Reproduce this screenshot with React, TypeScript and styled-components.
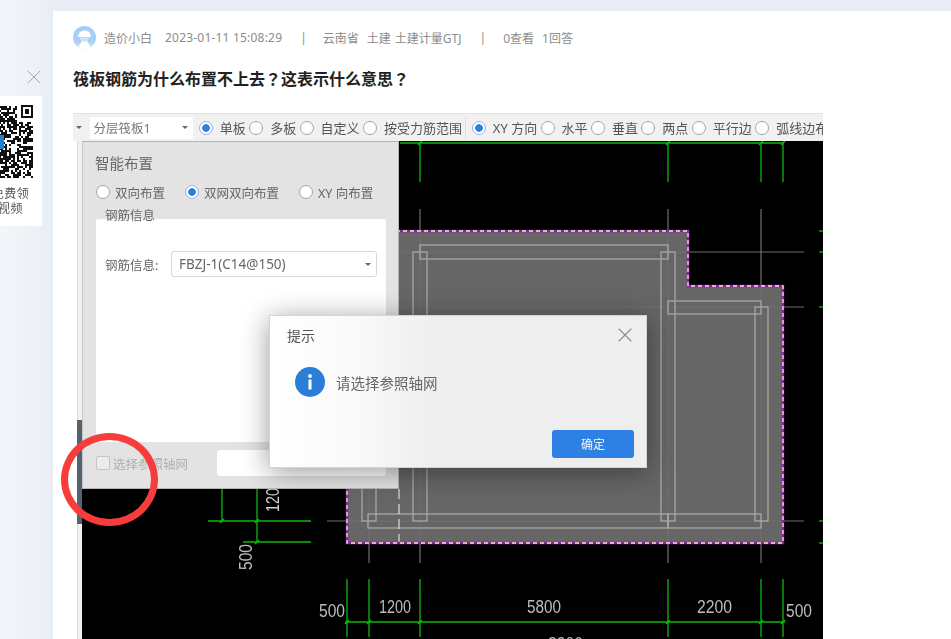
import styled, { createGlobalStyle } from "styled-components";
import { X } from "lucide-react";

const GlobalStyle = createGlobalStyle`
  html, body {
    margin: 0;
    padding: 0;
    background: #eef2f7;
  }
  * {
    box-sizing: border-box;
  }
`;

const FONT = `"Noto Sans", "Noto Sans CJK SC", sans-serif`;

const Page = styled.div`
  position: relative;
  height: 639px;
  overflow: hidden;
  padding: 11px 0 0 53px;
  font-family: ${FONT};
  background: linear-gradient(90deg, #f2f5f9 0, #eef2f7 30px, #e8edf4 53px);
`;

const Card = styled.main`
  background: #fff;
  height: 100%;
  padding: 15px 0 0 20px;
`;

const Meta = styled.div`
  display: flex;
  align-items: center;
  height: 23px;
  font-size: 12px;
  color: #8c8c8c;
  white-space: nowrap;
`;

const Name = styled.span`
  margin-left: 8px;
`;

const Item = styled.span<{ $gap: number; $wide?: boolean }>`
  margin-left: ${({ $gap }) => $gap}px;
  letter-spacing: ${({ $wide }) => ($wide ? "0.2px" : "normal")};
`;

const Title = styled.h1`
  margin: 18px 0 22px;
  font-family: "Noto Sans", "Noto Sans CJK TC", sans-serif;
  font-size: 16px;
  line-height: 24px;
  font-weight: 700;
  color: #222;
`;

/* the pasted picture, slightly soft like the original upload */
const Shot = styled.div`
  position: relative;
  width: 750px;
  height: 526px;
  filter: blur(0.45px);
`;

const Toolbar = styled.div`
  display: flex;
  align-items: center;
  gap: 3.4px;
  height: 28px;
  padding-left: 3px;
  overflow: hidden;
  background: #f1f1f1;
  border-top: 1px solid #e2e2e2;
  font-size: 13px;
  color: #555;
  white-space: nowrap;
`;

const Caret = styled.i`
  flex: none;
  width: 0;
  height: 0;
  border-left: 3px solid transparent;
  border-right: 3px solid transparent;
  border-top: 3px solid #666;
`;

const ToolSelect = styled.div`
  flex: none;
  display: flex;
  align-items: center;
  justify-content: space-between;
  width: 103px;
  height: 22px;
  margin: 0 2px 0 5px;
  padding: 0 5px 0 3px;
  background: #fff;
  border-radius: 2px;
  font-size: 12.5px;
  color: #777;
`;

const Radio = styled.i<{ $on?: boolean }>`
  flex: none;
  display: block;
  width: 14px;
  height: 14px;
  border-radius: 50%;
  border: 1px solid ${({ $on }) => ($on ? "#8fb6e6" : "#a5a5a5")};
  background: ${({ $on }) =>
    $on ? "radial-gradient(circle, #2f7de0 0 3.5px, #fff 4px)" : "#fff"};
`;

const Choice = styled.label<{ $gap?: number }>`
  flex: none;
  display: flex;
  align-items: center;
  gap: ${({ $gap }) => $gap ?? 7}px;
`;

const Sep = styled.i`
  flex: none;
  width: 1px;
  height: 22px;
  margin-right: 2px;
  background: #ddd;
`;

const Canvas = styled.div`
  display: flex;
  height: 498px;
`;

const Strip = styled.div`
  flex: none;
  display: flex;
  justify-content: flex-end;
  width: 9px;
  padding-top: 279px;
  background: linear-gradient(90deg, #fff 0 4px, #dcdcdc 4px 5px, #f1f1f1 5px);
`;

const StripBar = styled.i`
  display: block;
  width: 5px;
  height: 104px;
  background: #56616e;
`;

const Drawing = styled.svg`
  display: block;
  flex: none;
  width: 741px;
  height: 498px;
  background: #000;
`;

const Panel = styled.section`
  position: absolute;
  left: 9px;
  top: 28px;
  width: 317px;
  height: 348px;
  padding: 11px 12px 0 13px;
  background: #e3e3e3;
  border: 1px solid #b5b5b5;
  border-left-color: #c8c8c8;
  font-size: 12.5px;
  color: #666;
`;

const PanelTitle = styled.div`
  margin-left: -1px;
  font-size: 14.5px;
  line-height: 20px;
`;

const PanelChoices = styled.div`
  display: flex;
  align-items: center;
  gap: 20px;
  height: 20px;
  margin: 9px 0 17px;
`;

const Group = styled.div`
  position: relative;
  height: 223px;
  padding: 32px 9px 0;
  background: #fff;
  border-radius: 2px;
`;

const Legend = styled.span`
  position: absolute;
  left: 9px;
  top: -12px;
  line-height: 18px;
`;

const Field = styled.div`
  display: flex;
  align-items: center;
  justify-content: space-between;
`;

const FieldSelect = styled.div`
  display: flex;
  align-items: center;
  justify-content: space-between;
  width: 206px;
  height: 26px;
  padding: 0 5px 0 7px;
  border: 1px solid #d6d6d6;
  border-radius: 3px;
  font-family: "Noto Sans", sans-serif;
  font-size: 13.5px;
  color: #666;
`;

const PanelFooter = styled.div`
  display: flex;
  align-items: center;
  height: 42px;
  color: #b0b0b0;
`;

const Check = styled.i`
  flex: none;
  width: 14px;
  height: 14px;
  margin-right: 3px;
  background: #ececec;
  border: 1px solid #c4c4c4;
  border-radius: 2px;
`;

const FooterInput = styled.div`
  width: 169px;
  height: 26px;
  margin-left: auto;
  background: #fff;
  border-radius: 3px;
`;

const Dialog = styled.section`
  position: absolute;
  left: 196px;
  top: 202px;
  display: flex;
  flex-direction: column;
  width: 378px;
  height: 153px;
  padding: 9px 12px 9px 17px;
  background: linear-gradient(90deg, #fff 0, #f9f9f9 90px, #eeeeee 165px);
  border: 1px solid #d4d4d4;
  box-shadow: 0 4px 26px rgba(0, 0, 0, 0.4);
  color: #666;
`;

const DialogHead = styled.header`
  display: flex;
  align-items: center;
  justify-content: space-between;
  height: 20px;
  font-size: 14px;
  color: #555;
`;

const Close = styled.span`
  display: flex;
  margin-right: -3px;
  color: #8d8d8d;
`;

const DialogBody = styled.div`
  display: flex;
  align-items: center;
  gap: 11px;
  margin: 22px 0 0 8px;
  font-size: 14.5px;
`;

const OkButton = styled.button`
  align-self: flex-end;
  width: 82px;
  height: 28px;
  margin-top: auto;
  border: 0;
  border-radius: 3px;
  background: #2f80e4;
  font-family: ${FONT};
  font-size: 12px;
  color: #f3f7fd;
`;

const RedRing = styled.i`
  position: absolute;
  left: -12px;
  top: 320px;
  width: 97px;
  height: 93px;
  border: 7px solid #f73c3c;
  border-radius: 50%;
`;

const Promo = styled.aside`
  position: absolute;
  left: -46px;
  top: 96px;
  width: 88px;
  height: 130px;
  padding-top: 9px;
  background: #fff;
  filter: blur(0.35px);
  text-align: center;
  font-size: 12px;
  line-height: 15px;
  letter-spacing: 0.5px;
  color: #555;
`;

const QrCode = styled.svg`
  display: block;
  width: 88px;
  height: 73px;
  margin-bottom: 8px;
`;

const PromoClose = styled.span`
  position: absolute;
  left: 22px;
  top: 65px;
  display: flex;
  color: #a4a8ad;
`;

const GREEN = "#0db80d";
const GREY = "#6f6f6f";
const BAR = "#a8a8a8";

// page coordinates, so they read straight off the screenshot
const greenLines = [
  [400, 143, 783, 143],
  [420, 143, 420, 182],
  [668, 143, 668, 182],
  [761, 143, 761, 182],
  [783, 143, 783, 182],
  [208, 521, 311, 521],
  [243, 542, 311, 542],
  [222, 485, 222, 521],
  [257, 485, 257, 543],
  [347, 579, 347, 637],
  [369, 579, 369, 637],
  [420, 579, 420, 637],
  [668, 579, 668, 637],
  [761, 579, 761, 637],
  [783, 579, 783, 637],
  [345, 622, 785, 622],
  [819, 231, 823, 231],
  [819, 252, 823, 252],
  [819, 307, 823, 307],
  [819, 521, 823, 521],
  [819, 543, 823, 543],
];

const ticks = [
  [420, 143],
  [668, 143],
  [761, 143],
  [783, 143],
  [222, 521],
  [257, 521],
  [257, 542],
  [347, 622],
  [369, 622],
  [420, 622],
  [668, 622],
  [761, 622],
  [783, 622],
];

const axisLines = [
  [420, 209, 420, 563],
  [668, 209, 668, 563],
  [761, 209, 761, 563],
  [369, 400, 369, 563],
  [400, 252, 804, 252],
  [400, 307, 804, 307],
  [327, 521, 804, 521],
];

const bars = [
  [420, 245, 248, 14],
  [668, 301, 93, 13],
  [413, 252, 14, 269],
  [661, 252, 14, 269],
  [755, 307, 13, 214],
  [362, 400, 14, 121],
  [368, 514, 300, 14],
  [668, 514, 93, 14],
];

const labels = [
  { x: 319, y: 617, w: 26, t: "500" },
  { x: 379, y: 613, w: 32, t: "1200" },
  { x: 527, y: 613, w: 34, t: "5800" },
  { x: 697, y: 613, w: 35, t: "2200" },
  { x: 786, y: 617, w: 26, t: "500" },
  { x: 548, y: 650, w: 35, t: "8200" },
];

// stand-in modules for the promo code, same every render
const qrModules: [number, number][] = [];
let seed = 41;
for (let row = 0; row < 36; row++) {
  for (let col = 0; col < 39; col++) {
    seed = (seed * 1103515245 + 12345) & 0x7fffffff;
    if ((seed >> 16) % 100 < 60) qrModules.push([col * 2 + 1, row * 2 + 1]);
  }
}

const QR = () => (
  <QrCode viewBox="0 0 88 73">
    {qrModules
      .filter(([x, y]) => !(x > 62 && y < 16))
      .map(([x, y]) => (
        <rect key={`${x}-${y}`} x={x} y={y} width="2" height="2" fill="#111" />
      ))}
    <rect x="68" y="1" width="10" height="11" fill="none" stroke="#111" strokeWidth="2" />
    <rect x="71" y="4" width="4" height="5" fill="#111" />
    <rect x="40" y="30" width="10" height="14" fill="#1f7fd4" />
  </QrCode>
);

const Avatar = () => (
  <svg width="23" height="23" viewBox="0 0 23 23">
    <defs>
      <linearGradient id="av" x1="0" y1="0" x2="0" y2="1">
        <stop offset="0" stopColor="#a4cdf6" />
        <stop offset="0.7" stopColor="#a9d0f6" />
        <stop offset="1" stopColor="#e6f2fd" />
      </linearGradient>
    </defs>
    <circle cx="11.5" cy="11.5" r="11.5" fill="url(#av)" />
    <path d="M5 11c0-4 2.8-6.6 6.5-6.6S18 7 18 11z" fill="#fff" />
    <path d="M7 11.5h9c0 2.500-2 4.500-4.500 4.500S7 14 7 11.500z" fill="#cfe4fa" />
    <path d="M8.500 15.500h6l3 5.500a11 11 0 0 1-12 0z" fill="#fff" />
  </svg>
);

const InfoIcon = () => (
  <svg width="30" height="30" viewBox="0 0 30 30">
    <circle cx="15" cy="15" r="15" fill="#2a7ed5" />
    <circle cx="15" cy="9" r="1.900" fill="#fff" />
    <rect x="13.500" y="12.500" width="3" height="10" rx="0.500" fill="#fff" />
  </svg>
);

const CadDrawing = () => (
  <Drawing viewBox="82 141 741 498">
    <path d="M347 231H688V286H783V543H347Z" fill="#666" />
    {axisLines.map(([x1, y1, x2, y2]) => (
      <line key={`a${x1}-${y1}-${x2}`} x1={x1} y1={y1} x2={x2} y2={y2} stroke={GREY} strokeWidth="1.2" />
    ))}
    {bars.map(([x, y, width, height]) => (
      <rect key={`b${x}-${y}`} x={x} y={y} width={width} height={height} fill="none" stroke={BAR} strokeWidth="1.300" />
    ))}
    <line x1="399" y1="489" x2="399" y2="543" stroke="#ddd" strokeWidth="1.200" strokeDasharray="10 5" />
    <path d="M347 231H688V286H783V543H347Z" fill="none" stroke="#8a1fb0" strokeWidth="2.400" />
    <path d="M347 231H688V286H783V543H347Z" fill="none" stroke="#f6f0b8" strokeWidth="1.300" strokeDasharray="4 3" />
    {greenLines.map(([x1, y1, x2, y2]) => (
      <line key={`g${x1}-${y1}-${x2}-${y2}`} x1={x1} y1={y1} x2={x2} y2={y2} stroke={GREEN} strokeWidth="1.300" />
    ))}
    {ticks.map(([x, y]) => (
      <line key={`t${x}-${y}`} x1={x - 2} y1={y + 2} x2={x + 2} y2={y - 2} stroke={GREEN} strokeWidth="1.600" />
    ))}
    {labels.map((l) => (
      <text
        key={l.t + l.x}
        x={l.x}
        y={l.y}
        textLength={l.w}
        lengthAdjust="spacingAndGlyphs"
        fontFamily="Liberation Sans, sans-serif"
        fontSize="18"
        fill="#bdbdbd"
      >
        {l.t}
      </text>
    ))}
    <text
      transform="translate(252 570) rotate(-90)"
      textLength="26"
      lengthAdjust="spacingAndGlyphs"
      fontFamily="Liberation Sans, sans-serif"
      fontSize="18"
      fill="#bdbdbd"
    >
      500
    </text>
    <text
      transform="translate(279 512) rotate(-90)"
      textLength="32"
      lengthAdjust="spacingAndGlyphs"
      fontFamily="Liberation Sans, sans-serif"
      fontSize="18"
      fill="#d0d0d0"
    >
      1200
    </text>
  </Drawing>
);

export default function App() {
  return (
    <>
      <GlobalStyle />
      <Page>
        <Card>
          <Meta>
            <Avatar />
            <Name>造价小白</Name>
            <Item $gap={13} $wide>2023-01-11 15:08:29</Item>
            <Item $gap={18}>|</Item>
            <Item $gap={16}>云南省</Item>
            <Item $gap={8}>土建</Item>
            <Item $gap={4}>土建计量GTJ</Item>
            <Item $gap={18}>|</Item>
            <Item $gap={17}>0查看</Item>
            <Item $gap={8}>1回答</Item>
          </Meta>
          <Title>筏板钢筋为什么布置不上去？这表示什么意思？</Title>
          <Shot>
            <Toolbar>
              <Caret />
              <ToolSelect>
                分层筏板1
                <Caret />
              </ToolSelect>
              <Choice><Radio $on />单板</Choice>
              <Choice><Radio />多板</Choice>
              <Choice><Radio />自定义</Choice>
              <Choice><Radio />按受力筋范围</Choice>
              <Sep />
              <Choice><Radio $on />XY 方向</Choice>
              <Choice><Radio />水平</Choice>
              <Choice><Radio />垂直</Choice>
              <Choice><Radio />两点</Choice>
              <Choice><Radio />平行边</Choice>
              <Choice><Radio />弧线边布置</Choice>
            </Toolbar>
            <Canvas>
              <Strip>
                <StripBar />
              </Strip>
              <CadDrawing />
            </Canvas>
            <Panel>
              <PanelTitle>智能布置</PanelTitle>
              <PanelChoices>
                <Choice $gap={5}><Radio />双向布置</Choice>
                <Choice $gap={5}><Radio $on />双网双向布置</Choice>
                <Choice $gap={5}><Radio />XY 向布置</Choice>
              </PanelChoices>
              <Group>
                <Legend>钢筋信息</Legend>
                <Field>
                  钢筋信息:
                  <FieldSelect>
                    FBZJ-1(C14@150)
                    <Caret />
                  </FieldSelect>
                </Field>
              </Group>
              <PanelFooter>
                <Check />
                选择参照轴网
                <FooterInput />
              </PanelFooter>
            </Panel>
            <Dialog>
              <DialogHead>
                提示
                <Close><X size={24} strokeWidth={1.1} /></Close>
              </DialogHead>
              <DialogBody>
                <InfoIcon />
                请选择参照轴网
              </DialogBody>
              <OkButton>确定</OkButton>
            </Dialog>
            <RedRing />
          </Shot>
        </Card>
        <PromoClose><X size={24} strokeWidth={1} /></PromoClose>
        <Promo>
          <QR />
          扫码免费领
          <br />
          学习视频
        </Promo>
      </Page>
    </>
  );
}
